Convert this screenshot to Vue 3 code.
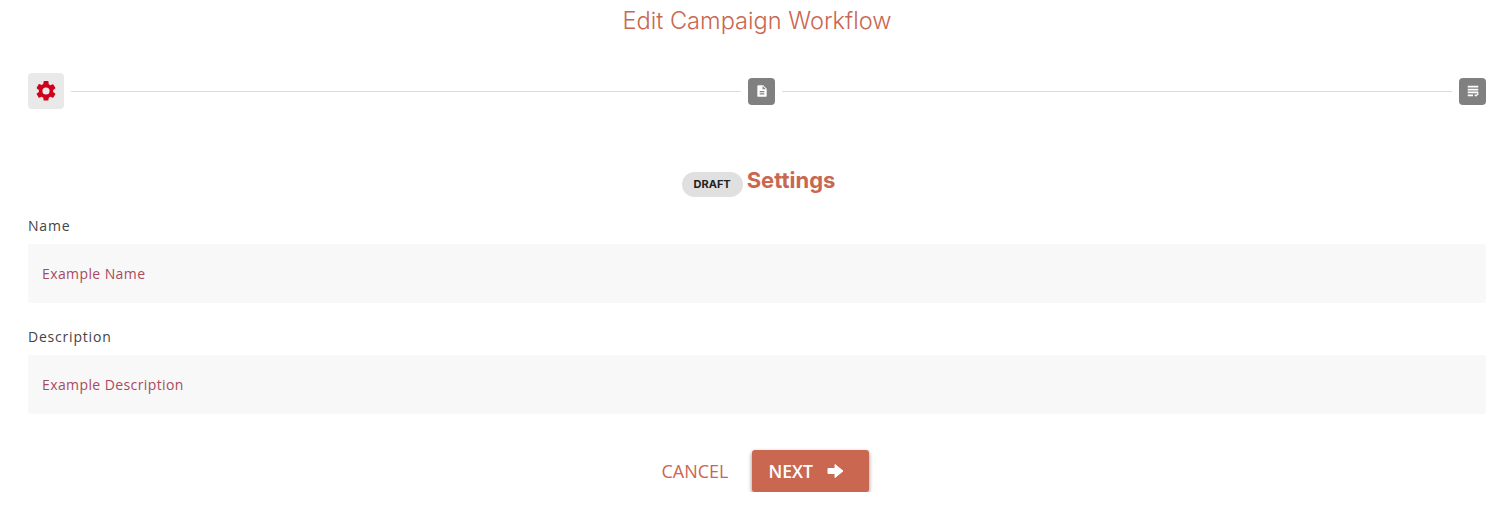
<template>
  <div class="page">
    <h1 class="title">Edit Campaign Workflow</h1>

    <div class="stepper">
      <div class="step step-active">
        <svg width="24" height="24" viewBox="0 0 24 24"><path fill="#d0021b" d="M19.14 12.94a7.1 7.1 0 0 0 0-1.88l2.03-1.58a.5.5 0 0 0 .12-.61l-1.92-3.32a.5.5 0 0 0-.59-.22l-2.39.96a7 7 0 0 0-1.62-.94l-.36-2.54A.5.5 0 0 0 13.93 2h-3.84a.5.5 0 0 0-.48.41l-.36 2.54a7.4 7.4 0 0 0-1.62.94l-2.39-.96a.5.5 0 0 0-.59.22L2.73 8.87a.5.5 0 0 0 .12.61l2.03 1.58a7 7 0 0 0 0 1.88l-2.03 1.58a.5.5 0 0 0-.12.61l1.92 3.32c.12.22.37.29.59.22l2.39-.96c.5.38 1.03.7 1.62.94l.36 2.54c.05.24.24.41.48.41h3.84c.24 0 .44-.17.47-.41l.36-2.54a7 7 0 0 0 1.62-.94l2.39.96c.22.08.47 0 .59-.22l1.92-3.32a.5.5 0 0 0-.12-.61zM12 15.6a3.6 3.6 0 1 1 0-7.2 3.6 3.6 0 0 1 0 7.2z"/></svg>
      </div>
      <div class="line"></div>
      <div class="step">
        <svg width="14" height="14" viewBox="0 0 24 24"><path fill="#fff" d="M14 2H6a2 2 0 0 0-2 2v16a2 2 0 0 0 2 2h12a2 2 0 0 0 2-2V8l-6-6zm2 16H8v-2h8v2zm0-4H8v-2h8v2zm-3-5V3.5L18.5 9H13z"/></svg>
      </div>
      <div class="line"></div>
      <div class="step">
        <svg width="14" height="14" viewBox="0 0 24 24"><path fill="#fff" d="M3 3h18v3H3zM3 8h18v3H3zM3 13h18v3H3zM3 18h9v3H3zM14 19l1.5-1.5 1.5 1.5 3.5-3.5L22 17l-5 5z"/></svg>
      </div>
    </div>

    <div class="heading">
      <span class="badge">DRAFT</span>
      <h2>Settings</h2>
    </div>

    <div class="field" v-for="f in fields" :key="f.label">
      <label>{{ f.label }}</label>
      <div class="input">{{ f.value }}</div>
    </div>

    <div class="actions">
      <button class="cancel" type="button">CANCEL</button>
      <button class="next" type="button">
        NEXT
        <svg width="17" height="16" viewBox="0 0 17 16"><path fill="#fff" stroke="#fff" stroke-width="1" stroke-linejoin="round" d="M1 5.5h7V1.5l8 6.5-8 6.5v-4H1z"/></svg>
      </button>
    </div>
  </div>
</template>

<script setup>
const fields = [
  { label: 'Name', value: 'Example Name' },
  { label: 'Description', value: 'Example Description' }
]
</script>

<style scoped>
.page {
  padding: 0 19px 0 28px;
  font-family: "Open Sans", sans-serif;
}

.title {
  margin: 0;
  padding-top: 6px;
  height: 42px;
  box-sizing: border-box;
  text-align: center;
  font-family: "Inter", "Open Sans", sans-serif;
  font-size: 23.6px;
  line-height: 30px;
  font-weight: 350;
  color: #c96751;
}

.stepper {
  display: flex;
  align-items: center;
  gap: 7px;
  margin-top: 31px;
  height: 36px;
}

.step {
  flex: none;
  width: 27px;
  height: 27px;
  border-radius: 4px;
  background: #808080;
  display: flex;
  align-items: center;
  justify-content: center;
}

.step-active {
  width: 36px;
  height: 36px;
  background: #e9e9e9;
}

.line {
  flex: 1;
  height: 1px;
  background: #dcdcdc;
}

.heading {
  display: flex;
  justify-content: center;
  align-items: center;
  gap: 4px;
  margin-top: 56px;
  padding-left: 3px;
  height: 36px;
}

.heading h2 {
  margin: 0 0 6px;
  font-family: "Inter", "Open Sans", sans-serif;
  font-size: 22px;
  font-weight: 700;
  line-height: 30px;
  color: #c96751;
}

.badge {
  width: 61px;
  height: 25px;
  margin-top: 2px;
  border-radius: 13px;
  background: #e0e0e0;
  display: flex;
  align-items: center;
  justify-content: center;
  font-family: "Inter", sans-serif;
  font-size: 11px;
  font-weight: 700;
  color: #222;
}

.field {
  margin-bottom: 24.7px;
}

.heading + .field {
  margin-top: 14.6px;
}

.field label {
  display: block;
  font-size: 14px;
  line-height: 20px;
  letter-spacing: 0.8px;
  color: #444;
  margin-bottom: 8px;
}

.input {
  height: 59px;
  padding: 0 14px;
  border-radius: 3px;
  background: #f8f8f8;
  display: flex;
  align-items: center;
  font-size: 14px;
  letter-spacing: 0.4px;
  color: #a84a62;
}

.actions {
  display: flex;
  justify-content: center;
  align-items: center;
  gap: 23px;
  margin-top: 36px;
  padding-left: 16px;
}

.cancel,
.next {
  border: none;
  font-family: "Open Sans", sans-serif;
  cursor: pointer;
}

.cancel {
  background: none;
  padding: 0 0 1px;
  font-size: 18px;
  font-weight: 500;
  color: #c96751;
}

.next {
  width: 117px;
  height: 42px;
  padding: 0 0 0 17px;
  border-radius: 3px;
  background: #c96751;
  color: #fff;
  font-size: 17.6px;
  font-weight: 600;
  box-shadow: 0 2px 4px rgba(0, 0, 0, 0.45);
  display: flex;
  align-items: center;
  justify-content: flex-start;
  gap: 14px;
}
</style>
